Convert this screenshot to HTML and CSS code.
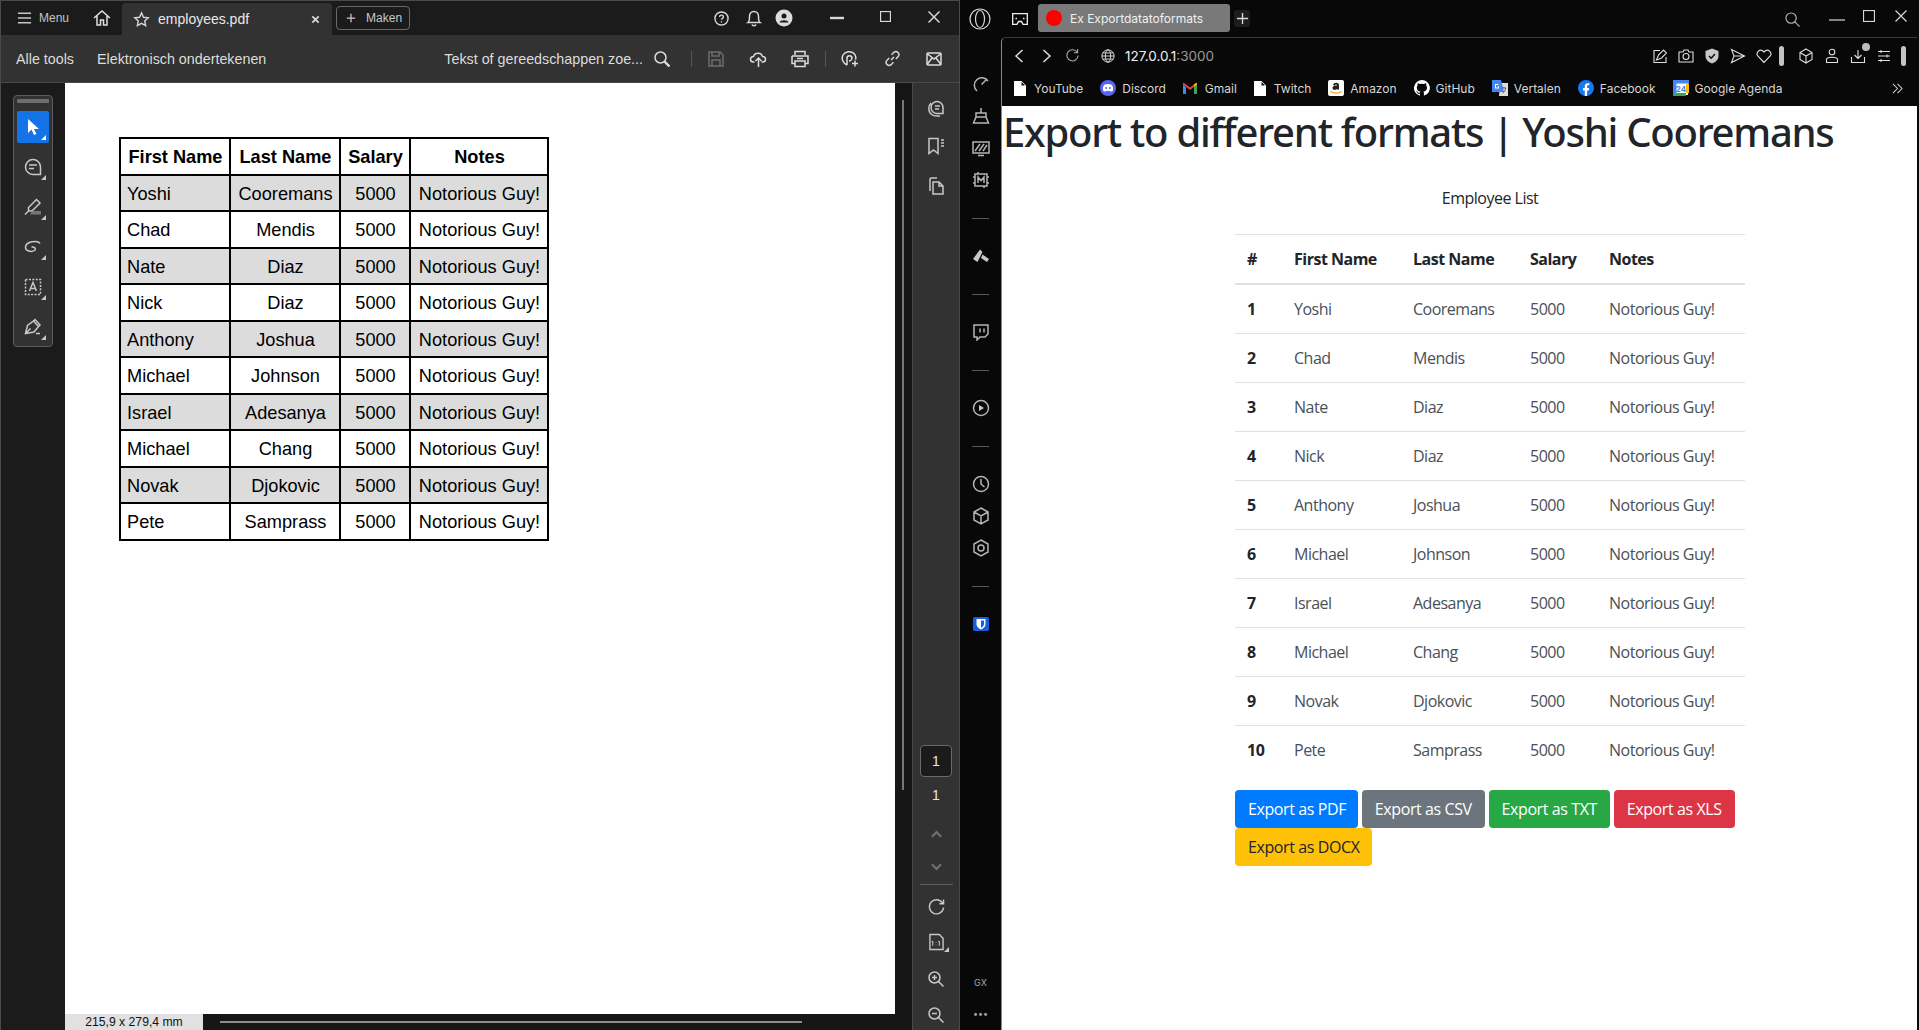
FILE: index.html
```html
<!DOCTYPE html>
<html lang="nl">
<head>
    <meta charset="UTF-8">
    <title>Export to different formats</title>
    <link rel="stylesheet" href="styles.css">
</head>
<body>
<div class="pdf-window">
    <div class="pdf-titlebar">
        <svg class="ic menu-ic" viewBox="0 0 16 14"><path d="M1 2h14M1 7h14M1 12h14"/></svg>
        <span class="menu-label">Menu</span>
        <svg class="ic home-ic" viewBox="0 0 20 20"><path d="M2 10l8-7 8 7M5 8v9h3.500v-5h3v5H15V8"/></svg>
        <div class="pdf-tab">
            <svg class="ic star-ic" viewBox="0 0 18 18"><path d="M9 2l2.100 4.600 5 .6-3.700 3.400 1 5L9 13.100 4.600 15.600l1-5L1.900 7.200l5-.6z"/></svg>
            <span class="pdf-tab-name">employees.pdf</span>
            <svg class="ic tab-x" viewBox="0 0 10 10"><path d="M1.500 1.500l7 7M8.500 1.500l-7 7"/></svg>
        </div>
        <div class="maken-btn">
            <svg class="ic plus-ic" viewBox="0 0 12 12"><path d="M6 1v10M1 6h10"/></svg>
            <span>Maken</span>
        </div>
        <div class="pdf-title-right">
            <svg class="ic slot-help" viewBox="0 0 16 16"><circle cx="8" cy="8" r="7"/><path d="M6 6.300c0-2.600 4-2.600 4 0 0 1.500-2 1.500-2 3M8 11v1.200"/></svg>
            <svg class="ic slot-bell" viewBox="0 0 16 18"><path d="M2 13.500c1.500-1 1.500-2.500 1.500-6 0-3 2-5 4.500-5s4.500 2 4.500 5c0 3.500 0 5 1.500 6zM6 15.500c.5 1.500 3.500 1.500 4 0"/></svg>
            <svg class="ic slot-user" viewBox="0 0 18 18"><circle class="solid" cx="9" cy="9" r="8.500"/><circle class="cut" cx="9" cy="7" r="2.500"/><path class="cut" d="M4.500 13.500c.5-3 8.500-3 9 0z"/></svg>
            <svg class="ic slot-min" viewBox="0 0 14 14"><path class="thick" d="M0 7h14"/></svg>
            <svg class="ic slot-max" viewBox="0 0 12 12"><rect x=".5" y=".5" width="11" height="11"/></svg>
            <svg class="ic slot-close" viewBox="0 0 12 12"><path d="M.5.5l11 11M11.500.5l-11 11"/></svg>
        </div>
    </div>
    <div class="pdf-toolbar">
        <span class="tool-link">Alle tools</span>
        <span class="tool-link sign-link">Elektronisch ondertekenen</span>
        <div class="pdf-tool-right">
            <span class="tool-search">Tekst of gereedschappen zoe...</span>
            <svg class="ic t-search" viewBox="0 0 16 16"><circle cx="6.500" cy="6.500" r="5.500"/><path class="thick" d="M10.500 10.500l5 5"/></svg>
            <i class="tool-sep sep-a"></i>
            <svg class="ic t-save muted" viewBox="0 0 16 16"><path d="M1 1h11l3 3v11H1zM4 1v4h7V1M4 15V9h8v6"/></svg>
            <svg class="ic t-upload" viewBox="0 0 18 18"><path d="M5 12H4C0 12 0 6.500 4 6.500 5 2 12 2 13 6.500c4 0 4 5.500 0 5.500h-1M9 17V8.500M6 11l3-3 3 3"/></svg>
            <svg class="ic t-print" viewBox="0 0 18 18"><path d="M4 5V1.500h10V5M1 6h16v7.500h-3M4 13.500H1V6M4 11h10v5.500H4zM6 8.500h6"/></svg>
            <i class="tool-sep sep-b"></i>
            <svg class="ic t-share" viewBox="0 0 18 18"><path d="M6 15C2 13 0 9 2 5c2-3.500 8-4.500 11-1.500 2 2 2 4.500 1.500 6M6 15V8c0-3 5-3 5 0 0 2-2 3-3 3M11 13.500h6M14 10.500v6"/></svg>
            <svg class="ic t-link" viewBox="0 0 18 18"><path d="M7.500 10.500l3-3M8 5l2.500-2.500c3-2.500 7 1.500 4.500 4.500L12.500 9.500M10 13l-2.500 2.500c-3 2.500-7-1.500-4.500-4.500L5.500 8.500"/></svg>
            <svg class="ic t-mail" viewBox="0 0 16 14"><rect x="1" y="1" width="14" height="12" rx="1"/><path d="M1 1.500l7 5.500 7-5.500M1 12.500l5-6.500M15 12.500l-5-6.500"/></svg>
        </div>
    </div>
    <div class="pdf-main">
        <div class="left-rail">
            <div class="tool-group">
                <div class="grip"></div>
                <div class="tool-btn tool-active">
                    <svg class="tool-ic" viewBox="0 0 16 18"><path class="fill-w" d="M3 1v14l3.500-3.500L9 17l2.500-1-2.500-5h5z"/></svg>
                    <i class="corner corner-w"></i>
                </div>
                <div class="tool-btn">
                    <svg class="ic tool-ic" viewBox="0 0 18 18"><path d="M9 1.500a7.500 7.500 0 1 0 0 15h7.500V9A7.500 7.500 0 0 0 9 1.500zM5 7h8M5 10.500h5"/></svg>
                    <i class="corner"></i>
                </div>
                <div class="tool-btn">
                    <svg class="ic tool-ic" viewBox="0 0 18 18"><path d="M12.500 1.500l3.500 3.500-8 8H4.500V9.500zM1 16.500l3-3"/><path class="dim-fill" d="M8 13h9v3.500H6z"/></svg>
                    <i class="corner"></i>
                </div>
                <div class="tool-btn">
                    <svg class="ic tool-ic" viewBox="0 0 18 18"><path d="M16 5.500C14 2 2 3 1.500 9c-.3 4 6 5.500 9 3.500 2-1.500 0-4-3-3.500"/></svg>
                    <i class="corner"></i>
                </div>
                <div class="tool-btn">
                    <svg class="ic tool-ic" viewBox="0 0 18 18"><path class="dash" d="M1.500 1.500h15v15h-15z"/><path d="M5.500 13L9 4.500l3.500 8.500M6.700 10.500h4.600"/></svg>
                    <i class="corner"></i>
                </div>
                <div class="tool-btn">
                    <svg class="ic tool-ic" viewBox="0 0 18 18"><path d="M1.500 15.500l2-8 6-4.500 5 5.500-4.500 5.500zM1.500 15.500l5-5M9.500 3l1.500-1.500 5 5.500-1.500 1.500M12 15.500h4"/></svg>
                    <i class="corner"></i>
                </div>
            </div>
        </div>
        <div class="page-col">
            <div class="page-canvas">
                <table class="pdf-table">
                    <thead>
                        <tr><th>First Name</th><th>Last Name</th><th>Salary</th><th>Notes</th></tr>
                    </thead>
                    <tbody>
                        <tr><td class="first">Yoshi</td><td>Cooremans</td><td>5000</td><td>Notorious Guy!</td></tr>
                        <tr><td class="first">Chad</td><td>Mendis</td><td>5000</td><td>Notorious Guy!</td></tr>
                        <tr><td class="first">Nate</td><td>Diaz</td><td>5000</td><td>Notorious Guy!</td></tr>
                        <tr><td class="first">Nick</td><td>Diaz</td><td>5000</td><td>Notorious Guy!</td></tr>
                        <tr><td class="first">Anthony</td><td>Joshua</td><td>5000</td><td>Notorious Guy!</td></tr>
                        <tr><td class="first">Michael</td><td>Johnson</td><td>5000</td><td>Notorious Guy!</td></tr>
                        <tr><td class="first">Israel</td><td>Adesanya</td><td>5000</td><td>Notorious Guy!</td></tr>
                        <tr><td class="first">Michael</td><td>Chang</td><td>5000</td><td>Notorious Guy!</td></tr>
                        <tr><td class="first">Novak</td><td>Djokovic</td><td>5000</td><td>Notorious Guy!</td></tr>
                        <tr><td class="first">Pete</td><td>Samprass</td><td>5000</td><td>Notorious Guy!</td></tr>
                    </tbody>
                </table>
            </div>
            <div class="page-status">
                <div class="page-size">215,9 x 279,4 mm</div>
                <div class="hscroll"></div>
            </div>
        </div>
        <div class="vscroll"><div class="vthumb"></div></div>
        <div class="right-rail">
            <svg class="ic rr r-comments" viewBox="0 0 18 18"><path d="M10 2.500a6 6 0 1 0 0 12h6V8.500a6 6 0 0 0-6-6zM8 7h5M8 10h4M4 4C1 7 1 12 4 15c1.500 1.500 4 2.500 9 2"/></svg>
            <svg class="ic rr r-bookmark" viewBox="0 0 18 18"><path d="M2 1.500h9v15l-4.500-3.500L2 16.500zM14 3h3M14 6h3M14 9h3"/></svg>
            <svg class="ic rr r-pages" viewBox="0 0 18 18"><path d="M6 5h6l4 4v8H6zM12 5v4h4M3 14V2c0-.5.500-1 1-1h6"/></svg>
            <div class="rr-spacer"></div>
            <div class="page-box">1</div>
            <div class="page-total">1</div>
            <svg class="ic rr r-up muted" viewBox="0 0 12 8"><path class="thick" d="M1 7l5-5 5 5"/></svg>
            <svg class="ic rr r-down muted" viewBox="0 0 12 8"><path class="thick" d="M1 1l5 5 5-5"/></svg>
            <div class="rr-line"></div>
            <svg class="ic rr r-rotate" viewBox="0 0 18 18"><path d="M15.500 5.500A7.500 7.500 0 1 0 16.500 10M16.500 1.500v4.500H12"/></svg>
            <div class="fit-wrap">
                <svg class="ic rr r-fit" viewBox="0 0 16 18"><path d="M1 1h10l4 4v12H1z"/><path class="thin" d="M4 8v5M4 8l-1 1M11 8v5M11 8l-1 1M7.500 9v.5M7.500 12v.5"/></svg>
                <i class="corner"></i>
            </div>
            <svg class="ic rr r-zoom" viewBox="0 0 16 16"><circle cx="6.500" cy="6.500" r="5.500"/><path d="M10.500 10.500l5 5M4 6.500h5M6.500 4v5"/></svg>
            <svg class="ic rr r-zoom2" viewBox="0 0 16 16"><circle cx="6.500" cy="6.500" r="5.500"/><path d="M10.500 10.500l5 5M4 6.500h5"/></svg>
        </div>
    </div>
</div>

<div class="browser-window">
    <div class="gx-top">
        <svg class="ic gx-logo" viewBox="0 0 22 22"><circle cx="11" cy="11" r="10"/><ellipse cx="11" cy="11" rx="4.500" ry="8.500"/></svg>
        <svg class="ic gx-island" viewBox="0 0 16 12"><path d="M.7.700h14.600v10.600h-4.300L9.500 8.500h-3L5 11.300H.7z"/><path d="M3.500 5.500h1.500M11 5.500h1.500"/></svg>
        <div class="gx-tab">
            <i class="gx-dot"></i>
            <span>Ex Exportdatatoformats</span>
        </div>
        <div class="gx-plus"><svg class="ic" viewBox="0 0 12 12"><path d="M6 0v12M0 6h12"/></svg></div>
        <div class="gx-top-right">
            <svg class="ic gx-search" viewBox="0 0 16 16"><circle cx="6.500" cy="6.500" r="5.500"/><path d="M10.500 10.500l5 5"/></svg>
            <svg class="ic gx-min" viewBox="0 0 16 4"><path d="M0 2h16"/></svg>
            <svg class="ic gx-max" viewBox="0 0 12 12"><rect x=".5" y=".5" width="11" height="11"/></svg>
            <svg class="ic gx-close" viewBox="0 0 12 12"><path d="M.5.500l11 11M11.500.5l-11 11"/></svg>
        </div>
    </div>
    <div class="gx-body">
        <div class="gx-side">
            <svg class="ic side-ic s-speed" viewBox="0 0 18 18"><path d="M5 16A7.500 7.500 0 1 1 16 6M9.500 9.500L14 5"/></svg>
            <svg class="ic side-ic" viewBox="0 0 18 18"><path d="M9 1v5M4 6h10v4H4zM4 10l-2.500 6h15L14 10"/></svg>
            <svg class="ic side-ic" viewBox="0 0 18 18"><path d="M1 3h16v11H1zM6 16.500h6M3 12l5-7M7 12l5-7M11 12l4-6"/></svg>
            <svg class="ic side-ic" viewBox="0 0 18 18"><path d="M3 3h12v12H3zM1 6h2M1 12h2M15 6h2M15 12h2M6 1v2M12 15v2M6 12V6l3 3.500L12 6v6"/></svg>
            <i class="side-sep"></i>
            <svg class="side-ic" viewBox="0 0 18 18"><path class="fill-l" d="M8 2.500L10.500 5 5.500 15 1 12zM10.500 7.500L17 12l-2 3-6-4z"/></svg>
            <i class="side-sep"></i>
            <svg class="ic side-ic" viewBox="0 0 18 18"><path d="M2 2h14v9l-3 3H8l-3 3v-3H2zM8 5.500v4M12 5.500v4"/></svg>
            <i class="side-sep"></i>
            <svg class="ic side-ic" viewBox="0 0 18 18"><circle cx="9" cy="9" r="7.500"/><path class="fill-l" d="M7 6l5 3-5 3z"/></svg>
            <i class="side-sep"></i>
            <svg class="ic side-ic" viewBox="0 0 18 18"><circle cx="9" cy="9" r="7.500"/><path d="M9 4v5l3.500 3"/></svg>
            <svg class="ic side-ic" viewBox="0 0 18 18"><path d="M9 1l7 4v8l-7 4-7-4V5zM2 5l7 4 7-4M9 9v8"/></svg>
            <svg class="ic side-ic" viewBox="0 0 18 18"><path d="M9 1l7 4v8l-7 4-7-4V5z"/><circle cx="9" cy="9" r="3"/></svg>
            <i class="side-sep"></i>
            <svg class="side-ic" viewBox="0 0 18 18"><rect class="bw-bg" x="1" y="2" width="16" height="14" rx="2"/><path class="fill-w" d="M4.500 4h9v5c0 3-2.500 4.500-4.500 5.500C7 13.500 4.500 12 4.500 9z"/><path class="bw-bg" d="M9 5.500h3V9c0 2-1.500 3-3 3.800z"/></svg>
            <div class="side-foot">
                <span class="gx-mark">GX</span>
                <span class="gx-more">•••</span>
            </div>
        </div>
        <div class="gx-panel">
            <div class="addr-row">
                <svg class="ic a-back" viewBox="0 0 10 14"><path d="M8.500 1L2 7l6.500 6"/></svg>
                <svg class="ic a-fwd" viewBox="0 0 10 14"><path d="M1.500 1L8 7l-6.500 6"/></svg>
                <svg class="ic a-reload" viewBox="0 0 14 14"><path d="M12 3.500A6 6 0 1 0 13 7M12.500 0v4H8.500"/></svg>
                <svg class="ic a-globe" viewBox="0 0 16 16"><circle cx="8" cy="8" r="7"/><ellipse cx="8" cy="8" rx="3" ry="7"/><path d="M1 8h14M2 4.500h12M2 11.500h12"/></svg>
                <span class="addr-text">127.0.0.1<span class="addr-port">:3000</span></span>
                <div class="addr-right">
                    <svg class="ic ar-1" viewBox="0 0 16 16"><path d="M8 2.500H2v12h12V9M4.500 12l2-5 5-5 3 3-5 5z"/></svg>
                    <svg class="ic ar-2" viewBox="0 0 16 16"><path d="M1 4h4l1-2h4l1 2h4v10H1z"/><circle cx="8" cy="8.500" r="3"/></svg>
                    <svg class="ar-3" viewBox="0 0 16 16"><path class="fill-l" d="M8 .5l6.500 2.500v5c0 4-3.500 6.500-6.500 7.500C5 14.500 1.500 12 1.500 8V3z"/><path class="check" d="M5 8l2.200 2.200L11 6"/></svg>
                    <svg class="ic ar-4" viewBox="0 0 16 16"><path d="M1.500 1.500l13 6.500-13 6.500L4 8zM4 8h10.500"/></svg>
                    <svg class="ic ar-5" viewBox="0 0 16 16"><path d="M8 14.500L1.800 8C-.5 5 3.800-.5 8 4c4.200-4.500 8.500 1 6.200 4z"/></svg>
                    <i class="addr-pill pill-mid"></i>
                    <svg class="ic ar-6" viewBox="0 0 16 16"><path d="M8 1l6 3.500v7L8 15l-6-3.500v-7zM2 4.500L8 8l6-3.500M8 8v7"/></svg>
                    <svg class="ic ar-7" viewBox="0 0 16 16"><circle cx="8" cy="4" r="2.800"/><path d="M2.500 14.500v-3c0-3 11-3 11 0v3z"/></svg>
                    <div class="dl-wrap">
                        <svg class="ic" viewBox="0 0 16 16"><path d="M8 2v8.500M4.500 7L8 10.500 11.500 7M1.500 9v5.500h13V9"/></svg>
                        <i class="dl-dot"></i>
                    </div>
                    <svg class="ic ar-8" viewBox="0 0 16 16"><path d="M2 3.500h12M2 8h12M2 12.500h12M5 2v3M11 6.500v3M5 11v3"/></svg>
                    <i class="addr-pill"></i>
                </div>
            </div>
            <div class="bookmarks">
                <div class="bm"><svg class="bm-doc" viewBox="0 0 12 15"><path class="fill-w" d="M0 0h7.500L12 4.500V15H0zM7.500 1v3.500H11z"/></svg><span>YouTube</span></div>
                <div class="bm"><svg class="bm-ic" viewBox="0 0 16 16"><circle class="c-discord" cx="8" cy="8" r="8"/><path class="fill-w" d="M4 5c2.500-1.200 5.500-1.200 8 0 1 1.800 1.300 3.700 1 5.500-1 .8-1.500 1-2.500 1.200l-.7-1c-1.200.4-2.400.4-3.600 0l-.7 1C4.500 11.500 4 11.300 3 10.500 2.700 8.700 3 6.800 4 5z"/><circle class="c-discord" cx="6.200" cy="8" r="1"/><circle class="c-discord" cx="9.800" cy="8" r="1"/></svg><span>Discord</span></div>
                <div class="bm"><svg class="bm-gmail" viewBox="0 0 14 11"><path class="gm-r" d="M0 1.500L7 7l7-5.500V0h-1L7 4.500 1 0H0z"/><path class="gm-b" d="M0 1.500V11h3V4z"/><path class="gm-g" d="M14 1.500V11h-3V4z"/><path class="gm-y" d="M11 4l3-2.500V0h-1l-2 1.500z"/></svg><span>Gmail</span></div>
                <div class="bm"><svg class="bm-doc" viewBox="0 0 12 15"><path class="fill-w" d="M0 0h7.500L12 4.500V15H0zM7.500 1v3.500H11z"/></svg><span>Twitch</span></div>
                <div class="bm"><svg class="bm-ic" viewBox="0 0 16 16"><rect class="fill-w" width="16" height="16" rx="2"/><path class="az-a" d="M5 5c.5-3 6-3 6 0v4.500H9V9C7 10.500 4.500 10 4.500 8S7 5.500 9 5.500c0-1.500-2-1.500-2 0z"/><path class="az-o" d="M2.500 11.500c3 2.200 8 2.200 11 0"/></svg><span>Amazon</span></div>
                <div class="bm"><svg class="bm-ic" viewBox="0 0 16 16"><path class="fill-w" fill-rule="evenodd" d="M8 0a8 8 0 0 0-2.500 15.600c.4 0 .5-.2.5-.4v-1.400c-2.200.5-2.700-1-2.700-1-.4-.9-.9-1.200-.9-1.200-.7-.5 0-.5 0-.5.800 0 1.200.8 1.200.8.700 1.200 1.900.9 2.400.7 0-.5.300-.9.500-1.100-1.800-.2-3.700-.9-3.700-4 0-.9.300-1.600.8-2.100 0-.2-.3-1 .1-2.100 0 0 .7-.2 2.200.8a7.500 7.500 0 0 1 4 0c1.500-1 2.200-.8 2.200-.8.400 1.100.1 1.900.1 2.100.5.500.8 1.200.8 2.100 0 3.100-1.900 3.800-3.700 4 .3.300.6.800.6 1.500v2.200c0 .2.100.5.500.4A8 8 0 0 0 8 0z"/></svg><span>GitHub</span></div>
                <div class="bm"><svg class="bm-ic" viewBox="0 0 16 16"><path class="tr-l" d="M8 3h8v13H7z"/><path class="tr-b" d="M0 0h9l3 12H0z"/><path class="fill-w" d="M3 4h3.500v1H4v2.500h2V6h1v2.500H3z"/><path class="tr-d" d="M10 8h4M12 7v1M10.500 13c2-1 3-3 3-5"/></svg><span>Vertalen</span></div>
                <div class="bm"><svg class="bm-ic" viewBox="0 0 16 16"><circle class="c-fb" cx="8" cy="8" r="8"/><path class="fill-w" d="M6.800 16v-5.500H5V8h1.800V6.300C6.800 4.200 8 3.200 9.800 3.200l1.500.1v2H10.300c-.9 0-1.200.6-1.200 1.100V8h2l-.3 2.500H9.100V16z"/></svg><span>Facebook</span></div>
                <div class="bm"><svg class="bm-ic" viewBox="0 0 16 16"><rect class="cal-w" x="1" y="1" width="14" height="14"/><path class="gm-b" d="M0 0h16v3.500H3.500V13H0z"/><path class="gm-g" d="M0 13h13v3H0z"/><path class="gm-y" d="M13 3.500h3V13h-3z"/><text class="cal-t" x="8" y="11.500">24</text></svg><span>Google Agenda</span></div>
                <svg class="ic bm-more" viewBox="0 0 12 12"><path d="M1 1l5 5-5 5M6 1l5 5-5 5"/></svg>
            </div>
            <div class="web">
                <h1>Export to different formats | Yoshi Cooremans</h1>
                <div class="web-body">
                    <p class="list-title">Employee List</p>
                    <table class="emp-table">
                        <thead>
                            <tr><th>#</th><th>First Name</th><th>Last Name</th><th>Salary</th><th>Notes</th></tr>
                        </thead>
                        <tbody>
                            <tr><th>1</th><td>Yoshi</td><td>Cooremans</td><td>5000</td><td>Notorious Guy!</td></tr>
                            <tr><th>2</th><td>Chad</td><td>Mendis</td><td>5000</td><td>Notorious Guy!</td></tr>
                            <tr><th>3</th><td>Nate</td><td>Diaz</td><td>5000</td><td>Notorious Guy!</td></tr>
                            <tr><th>4</th><td>Nick</td><td>Diaz</td><td>5000</td><td>Notorious Guy!</td></tr>
                            <tr><th>5</th><td>Anthony</td><td>Joshua</td><td>5000</td><td>Notorious Guy!</td></tr>
                            <tr><th>6</th><td>Michael</td><td>Johnson</td><td>5000</td><td>Notorious Guy!</td></tr>
                            <tr><th>7</th><td>Israel</td><td>Adesanya</td><td>5000</td><td>Notorious Guy!</td></tr>
                            <tr><th>8</th><td>Michael</td><td>Chang</td><td>5000</td><td>Notorious Guy!</td></tr>
                            <tr><th>9</th><td>Novak</td><td>Djokovic</td><td>5000</td><td>Notorious Guy!</td></tr>
                            <tr><th>10</th><td>Pete</td><td>Samprass</td><td>5000</td><td>Notorious Guy!</td></tr>
                        </tbody>
                    </table>
                    <div class="export-btns">
                        <a class="btn btn-pdf">Export as PDF</a>
                        <a class="btn btn-csv">Export as CSV</a>
                        <a class="btn btn-txt">Export as TXT</a>
                        <a class="btn btn-xls">Export as XLS</a>
                        <a class="btn btn-docx">Export as DOCX</a>
                    </div>
                </div>
            </div>
        </div>
    </div>
</div>
</body>
</html>
```

FILE: styles.css
```css
* {
    box-sizing: border-box;
}
html, body {
    height: 100%;
}
body {
    margin: 0;
    display: flex;
    height: 1030px;
    overflow: hidden;
    background: #080808;
    font-family: "Liberation Sans", Arial, sans-serif;
}

/* shared icon look */
.ic {
    fill: none;
    stroke: currentColor;
    stroke-width: 1.5;
    flex: none;
    display: block;
}
.ic .thick { stroke-width: 2.4; }
.ic .thin { stroke-width: 1.1; }
.ic .solid { fill: currentColor; stroke: none; }
.ic .cut { fill: #1b1b1b; stroke: none; }
.fill-w { fill: #fff; stroke: none; }
.fill-l { fill: #c8c8c8; stroke: none; }
.dim-fill { fill: #777; stroke: none; }
.dash { stroke-dasharray: 2 1.4; }
.muted { color: #6e6e6e; }

/* pdf window */
.pdf-window {
    width: 960px;
    flex: none;
    display: flex;
    flex-direction: column;
    border-left: 1px solid #4a4a4a;
    border-top: 1px solid #4a4a4a;
    border-right: 1px solid #4a4a4a;
}
.pdf-titlebar {
    height: 34px;
    flex: none;
    display: flex;
    align-items: center;
    background: #1b1b1b;
    color: #d5d5d5;
}
.menu-ic {
    width: 15px;
    height: 14px;
    margin-left: 16px;
    color: #c8c8c8;
}
.menu-label {
    font-size: 12px;
    margin-left: 7px;
    color: #c4c4c4;
}
.home-ic {
    width: 20px;
    height: 20px;
    margin-left: 23px;
    color: #e0e0e0;
}
.pdf-tab {
    width: 210px;
    height: 32px;
    margin-top: 2px;
    margin-left: 10px;
    align-self: flex-end;
    display: flex;
    align-items: center;
    background: #323232;
    border-radius: 4px 4px 0 0;
}
.star-ic {
    width: 17px;
    height: 17px;
    margin-left: 11px;
}
.pdf-tab-name {
    margin-left: 8px;
    font-size: 14px;
    color: #e8e8e8;
}
.tab-x {
    width: 9px;
    height: 9px;
    margin-left: auto;
    margin-right: 12px;
    stroke-width: 2;
}
.maken-btn {
    width: 74px;
    height: 24px;
    margin-left: 4px;
    display: flex;
    align-items: center;
    border: 1px solid #6a6a6a;
    border-radius: 4px;
    font-size: 12px;
    color: #c8c8c8;
}
.plus-ic {
    width: 10px;
    height: 10px;
    margin: 0 10px 0 9px;
}
.pdf-title-right {
    margin-left: auto;
    display: flex;
    align-items: center;
    color: #d8d8d8;
}
.slot-help { width: 15px; height: 15px; margin-right: 2px; }
.slot-bell { width: 16px; height: 18px; margin-left: 15px; }
.slot-user { width: 18px; height: 18px; margin-left: 13px; color: #dcdcdc; }
.slot-min { width: 14px; height: 14px; margin-left: 37px; }
.slot-max { width: 11px; height: 11px; margin-left: 36px; margin-top: -3px; }
.slot-close { width: 12px; height: 12px; margin-left: 37px; margin-right: 19px; margin-top: -3px; }

.pdf-toolbar {
    height: 48px;
    flex: none;
    display: flex;
    align-items: center;
    background: #323232;
    border-bottom: 1px solid #4a4a4a;
    color: #dcdcdc;
    font-size: 14.3px;
}
.tool-link {
    margin-left: 15px;
}
.sign-link {
    margin-left: 23px;
}
.pdf-tool-right {
    margin-left: auto;
    display: flex;
    align-items: center;
}
.t-search { width: 16px; height: 16px; margin-left: 11px; }
.tool-sep {
    width: 1px;
    height: 16px;
    background: #555;
}
.sep-a { margin-left: 21px; }
.t-save { width: 16px; height: 16px; margin-left: 16px; }
.t-upload { width: 19px; height: 18px; margin-left: 25px; }
.t-print { width: 18px; height: 18px; margin-left: 23px; }
.sep-b { margin-left: 16px; }
.t-share { width: 18px; height: 18px; margin-left: 15px; }
.t-link { width: 17px; height: 17px; margin-left: 25px; }
.t-mail { width: 16px; height: 14px; margin-left: 25px; margin-right: 17px; }

.pdf-main {
    flex: 1;
    min-height: 0;
    display: flex;
}
.left-rail {
    width: 64px;
    flex: none;
    background: #1b1b1b;
    padding: 12px 0 0 12px;
}
.tool-group {
    width: 40px;
    height: 252px;
    border: 1px solid #5b5b5b;
    border-radius: 4px;
    background: #323232;
    padding: 3px;
}
.grip {
    height: 4px;
    background: #6e6e6e;
    border-radius: 1px;
    margin-bottom: 8px;
}
.tool-btn {
    position: relative;
    width: 32px;
    height: 32px;
    margin-bottom: 8px;
    display: flex;
    align-items: center;
    justify-content: center;
    color: #c8c8c8;
    border-radius: 2px;
}
.tool-active {
    background: #1473e6;
}
.tool-ic {
    width: 18px;
    height: 18px;
}
.corner {
    position: absolute;
    right: 3px;
    bottom: 3px;
    border-left: 5px solid transparent;
    border-bottom: 5px solid #c8c8c8;
}
.corner-w {
    border-bottom-color: #fff;
}

.page-col {
    flex: 1;
    min-width: 0;
    display: flex;
    flex-direction: column;
}
.page-canvas {
    flex: 1;
    background: #fff;
    padding: 54px 0 0 54px;
}
.pdf-table {
    border-collapse: collapse;
    border: 2.4px solid #000;
    table-layout: fixed;
    width: 430px;
    font-size: 18.2px;
    color: #000;
}
.pdf-table th, .pdf-table td {
    border: 2.4px solid #000;
    height: 36.5px;
    padding: 3px 5px 0 6px;
    text-align: center;
    white-space: nowrap;
    overflow: hidden;
}
.pdf-table th:nth-child(1) { width: 110px; }
.pdf-table th:nth-child(2) { width: 110px; }
.pdf-table th:nth-child(3) { width: 70px; }
.pdf-table td.first { text-align: left; }
.pdf-table tbody tr:nth-child(odd) td { background: #dcdcdc; }

.page-status {
    height: 16px;
    flex: none;
    display: flex;
    align-items: center;
    background: #161616;
}
.page-size {
    width: 138px;
    height: 16px;
    background: #e1e1e1;
    color: #111;
    font-size: 12.2px;
    line-height: 16px;
    text-align: center;
}
.hscroll {
    width: 582px;
    height: 2px;
    margin-left: 17px;
    background: #8c8c8c;
}
.vscroll {
    width: 17px;
    flex: none;
    background: #161616;
    padding: 17px 0 0 7px;
}
.vthumb {
    width: 2px;
    height: 690px;
    background: #777;
}
.right-rail {
    width: 47px;
    flex: none;
    display: flex;
    flex-direction: column;
    align-items: center;
    background: #323232;
    border-left: 1px solid #4a4a4a;
    color: #c8c8c8;
}
.r-comments { width: 18px; height: 18px; margin-top: 16px; }
.r-bookmark { width: 18px; height: 18px; margin-top: 20px; }
.r-pages { width: 18px; height: 18px; margin-top: 22px; }
.rr-spacer { flex: 1; }
.page-box {
    width: 32px;
    height: 32px;
    border: 1px solid #6a6a6a;
    border-radius: 4px;
    background: #1b1b1b;
    color: #e8e8e8;
    font-size: 14px;
    line-height: 30px;
    text-align: center;
}
.page-total {
    margin-top: 10px;
    font-size: 14px;
    line-height: 16px;
    color: #e8e8e8;
}
.r-up { width: 11px; height: 8px; margin-top: 27px; }
.r-down { width: 11px; height: 8px; margin-top: 25px; }
.rr-line {
    width: 33px;
    height: 1px;
    margin-top: 13px;
    background: #5e5e5e;
}
.r-rotate { width: 17px; height: 17px; margin-top: 13px; }
.fit-wrap {
    position: relative;
    width: 24px;
    margin-top: 18px;
    display: flex;
    justify-content: center;
}
.r-fit { width: 15px; height: 18px; }
.fit-wrap .corner { right: -1px; bottom: -1px; }
.r-zoom { width: 16px; height: 16px; margin-top: 20px; }
.r-zoom2 { width: 16px; height: 16px; margin-top: 20px; margin-bottom: 7px; }

/* browser window */
.browser-window {
    flex: 1;
    min-width: 0;
    display: flex;
    flex-direction: column;
    background: #080808;
}
.gx-top {
    height: 37px;
    flex: none;
    display: flex;
    align-items: center;
    color: #d8d8d8;
}
.gx-logo { width: 22px; height: 22px; margin-left: 9px; stroke-width: 1.2; }
.gx-island { width: 16px; height: 12px; margin-left: 21px; color: #f0f0f0; stroke-width: 1.3; }
.gx-tab {
    width: 192px;
    height: 28px;
    margin-left: 10px;
    margin-top: -1px;
    display: flex;
    align-items: center;
    background: #797979;
    border-radius: 3px;
    color: #f0f0f0;
    font-family: Inter, "Liberation Sans", sans-serif;
    font-size: 12px;
}
.gx-dot {
    width: 16px;
    height: 16px;
    margin: 0 8px;
    border-radius: 50%;
    background: #f00;
}
.gx-plus {
    width: 16px;
    height: 17px;
    margin-left: 4px;
    display: flex;
    align-items: center;
    justify-content: center;
    background: #1d1d1d;
    border-radius: 3px;
}
.gx-plus .ic { width: 11px; height: 11px; }
.gx-top-right {
    margin-left: auto;
    display: flex;
    align-items: center;
}
.gx-search { width: 15px; height: 15px; margin-top: 2px; color: #b8b8b8; stroke-width: 1.2; }
.gx-min { width: 16px; height: 4px; margin-left: 29px; margin-top: 3px; stroke-width: 1.2; }
.gx-max { width: 12px; height: 12px; margin-left: 18px; margin-top: -6px; stroke-width: 1.2; }
.gx-close { width: 12px; height: 12px; margin-left: 20px; margin-right: 12px; margin-top: -6px; stroke-width: 1.2; }

.gx-body {
    flex: 1;
    min-height: 0;
    display: flex;
}
.gx-side {
    width: 41px;
    flex: none;
    display: flex;
    flex-direction: column;
    align-items: center;
    padding-top: 38px;
    color: #b4b4b4;
}
.side-ic {
    width: 18px;
    height: 18px;
    margin-bottom: 14px;
}
.side-sep {
    width: 17px;
    height: 1px;
    margin: 15px 0 28px;
    background: #5a5a5a;
}
.bw-bg { fill: #175ddc; stroke: none; }
.side-foot {
    margin-top: auto;
    padding-bottom: 11px;
    display: flex;
    flex-direction: column;
    align-items: center;
    font-family: Inter, "Liberation Sans", sans-serif;
    color: #a8a8a8;
}
.gx-mark { font-size: 9px; margin-bottom: 20px; }
.gx-more { font-size: 9px; letter-spacing: 0; }

.gx-panel {
    flex: 1;
    min-width: 0;
    display: flex;
    flex-direction: column;
    border-top: 1px solid #3a3a3a;
    border-left: 1px solid #8a8a8a;
    border-top-left-radius: 5px;
    margin-right: 2px;
}
.addr-row {
    height: 32px;
    padding-top: 3px;
    flex: none;
    display: flex;
    align-items: center;
    color: #dedede;
    font-family: Inter, "Liberation Sans", sans-serif;
}
.a-back { width: 10px; height: 14px; margin-left: 12px; }
.a-fwd { width: 10px; height: 14px; margin-left: 18px; }
.a-reload { width: 13px; height: 13px; margin-left: 14px; stroke-width: 1.2; color: #a8a8a8; }
.a-globe { width: 14px; height: 14px; margin-left: 22px; stroke-width: 1.1; }
.addr-text {
    margin-left: 10px;
    font-size: 13.500px;
    color: #f0f0f0;
}
.addr-port { color: #9a9a9a; }
.addr-right {
    margin-left: auto;
    display: flex;
    align-items: center;
    gap: 10px;
    padding-right: 12px;
}
.addr-right svg { width: 16px; height: 16px; }
.addr-right .ic { stroke-width: 1.1; }
.ar-3 .check { fill: none; stroke: #111; stroke-width: 1.6; }
.addr-pill {
    width: 5px;
    height: 20px;
    margin: 0 -1px;
    border-radius: 3px;
    background: #c4c4c4;
}
.addr-pill.pill-mid {
    margin: 0 4px 0 -3px;
}
.dl-wrap {
    position: relative;
    width: 16px;
    height: 16px;
}
.dl-dot {
    position: absolute;
    top: -5px;
    right: -4px;
    width: 8px;
    height: 8px;
    border-radius: 50%;
    background: #bdbdbd;
}
.bookmarks {
    height: 36px;
    flex: none;
    display: flex;
    align-items: center;
    gap: 17px;
    padding-left: 12px;
    font-family: Inter, "Liberation Sans", sans-serif;
    font-size: 12px;
    color: #d6d6d6;
}
.bm {
    display: flex;
    align-items: center;
    gap: 6px;
    white-space: nowrap;
}
.bm-doc { width: 12px; height: 15px; margin-right: 2px; }
.bm-ic { width: 16px; height: 16px; }
.bm-gmail { width: 14px; height: 11px; margin-right: 2px; }
.c-discord { fill: #5865f2; }
.gm-r { fill: #ea4335; }
.gm-b { fill: #4285f4; }
.gm-g { fill: #34a853; }
.gm-y { fill: #fbbc04; }
.az-a { fill: #222; }
.az-o { fill: none; stroke: #f90; stroke-width: 1.2; }
.tr-l { fill: #ddd; }
.tr-b { fill: #4285f4; }
.tr-d { fill: none; stroke: #555; stroke-width: .9; }
.c-fb { fill: #1877f2; }
.cal-w { fill: #fff; }
.cal-t { font-size: 8px; font-weight: 700; fill: #4285f4; text-anchor: middle; }
.bm-more {
    width: 11px;
    height: 11px;
    margin-left: auto;
    margin-right: 14px;
    stroke-width: 1.1;
}

/* the web page */
.web {
    flex: 1;
    min-height: 0;
    background: #fff;
    color: #212529;
    font-family: "Open Sans", "Noto Sans", sans-serif;
    font-size: 16px;
    line-height: 24px;
}
.web h1 {
    margin: 2px 0 0;
    padding-left: 1px;
    font-family: "Noto Sans", "Open Sans", sans-serif;
    font-size: 40px;
    line-height: 48px;
    font-weight: 500;
    letter-spacing: -1.26px;
    white-space: nowrap;
}
.web-body {
    width: 510px;
    margin-left: 233px;
    letter-spacing: -.5px;
}
.list-title {
    margin: 30px 0 24px;
    text-align: center;
}
.emp-table {
    width: 510px;
    border-collapse: collapse;
    table-layout: fixed;
}
.emp-table th, .emp-table td {
    padding: 12px;
    text-align: left;
    border-top: 1px solid #dee2e6;
    font-weight: 400;
    color: #495057;
    white-space: nowrap;
}
.emp-table th {
    font-weight: 700;
    color: #212529;
}
.emp-table thead th {
    border-bottom: 2px solid #dee2e6;
}
.emp-table thead th:nth-child(1) { width: 47px; }
.emp-table thead th:nth-child(2) { width: 119px; }
.emp-table thead th:nth-child(3) { width: 117px; }
.emp-table thead th:nth-child(4) { width: 79px; }
.export-btns {
    margin-top: 16px;
    font-size: 16px;
    letter-spacing: -.4px;
}
.btn {
    display: inline-block;
    padding: 7px 13px;
    height: 38px;
    border-radius: 4px;
    color: #fff;
    line-height: 24px;
    white-space: nowrap;
}
.btn-pdf { background: #007bff; padding-right: 12px; }
.btn-csv { background: #6c757d; }
.btn-txt { background: #28a745; }
.btn-xls { background: #dc3545; }
.btn-docx { background: #ffc107; color: #212529; padding-right: 12px; }
```
